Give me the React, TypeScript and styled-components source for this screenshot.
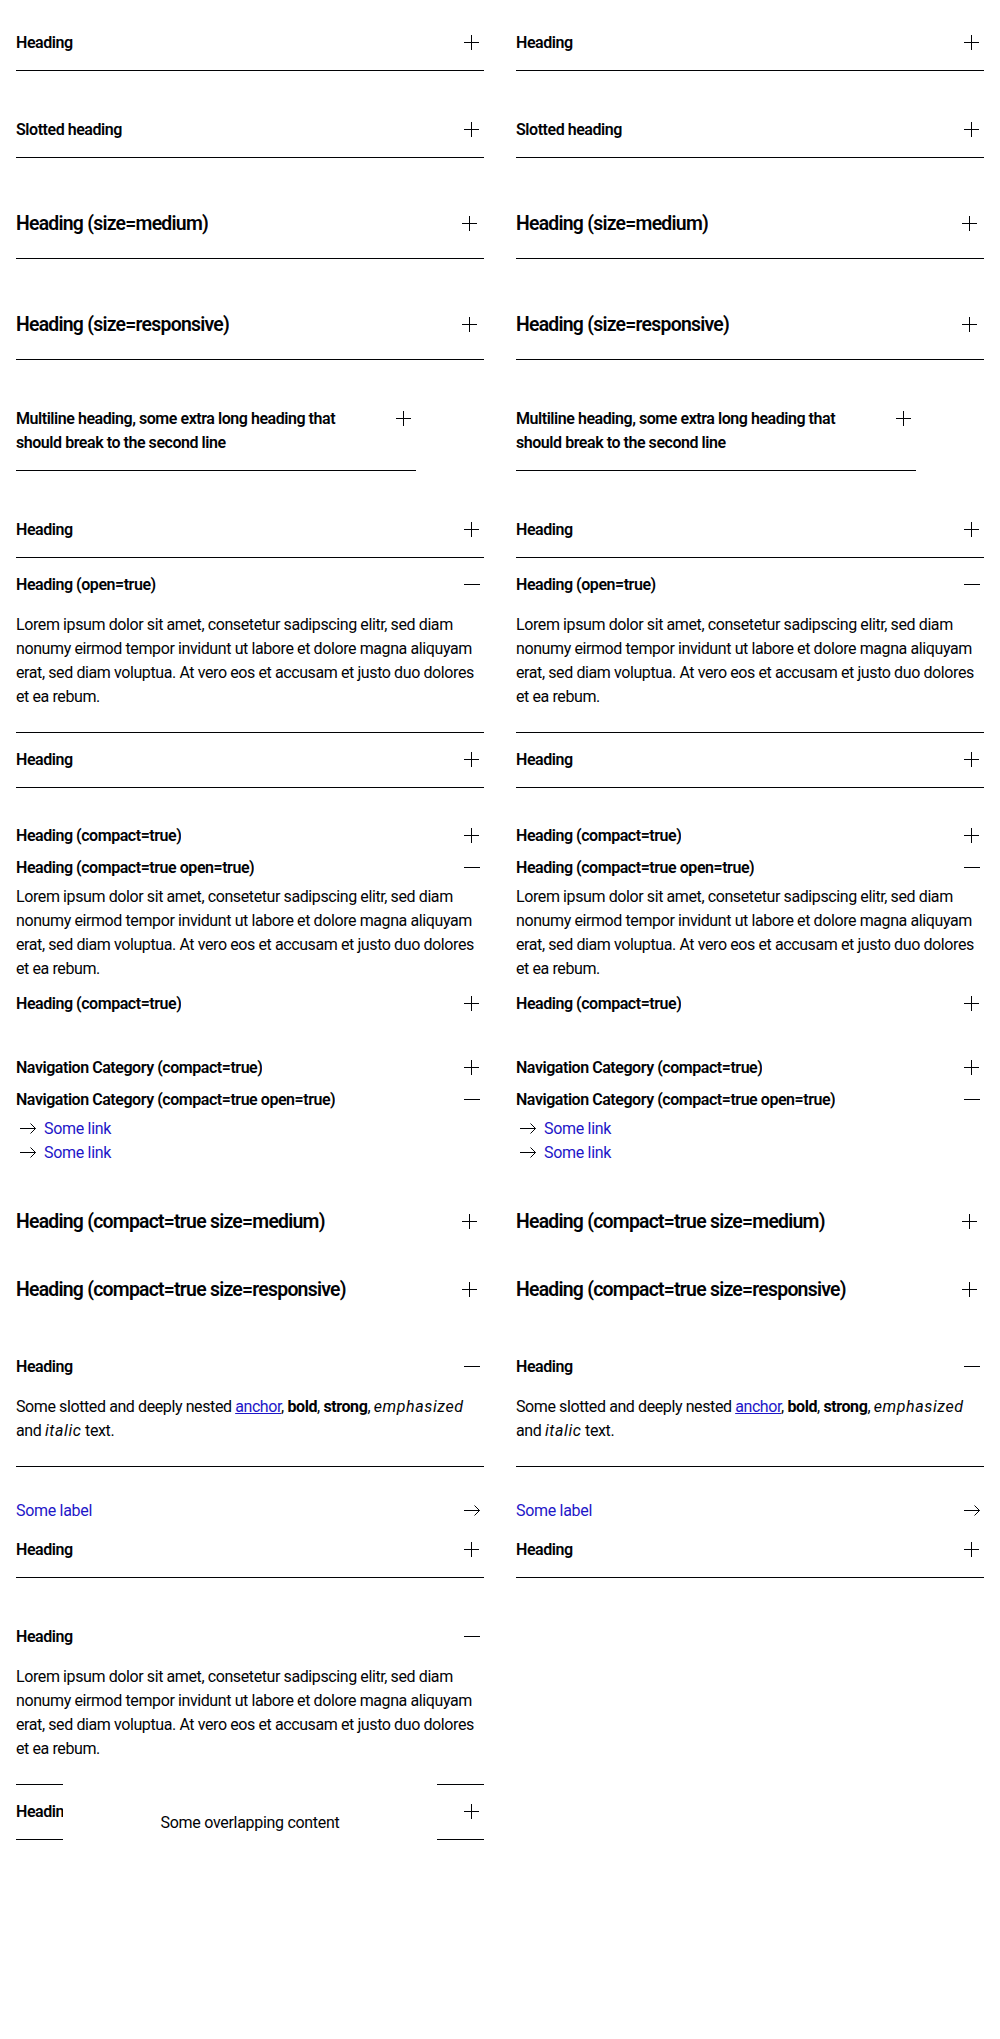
import React from "react";
import styled, { createGlobalStyle } from "styled-components";

const INK = "#010205";
const LINK = "#1e16c8";

const GlobalStyle = createGlobalStyle`
  html, body {
    margin: 0;
    padding: 0;
    background: #fff;
  }
  body {
    font-family: Roboto, "Liberation Sans", Arial, sans-serif;
    color: ${INK};
    -webkit-font-smoothing: antialiased;
  }
  * {
    box-sizing: border-box;
  }
`;

const LOREM =
  "Lorem ipsum dolor sit amet, consetetur sadipscing elitr, sed diam nonumy eirmod tempor invidunt ut labore et dolore magna aliquyam erat, sed diam voluptua. At vero eos et accusam et justo duo dolores et ea rebum.";

// icons
const PlusIcon = () => (
  <svg width="24" height="24" viewBox="0 0 24 24" fill="none" stroke={INK} strokeWidth="1">
    <path d="M4 11.5H19M11.5 4V19" />
  </svg>
);

const MinusIcon = () => (
  <svg width="24" height="24" viewBox="0 0 24 24" fill="none" stroke={INK} strokeWidth="1">
    <path d="M4 11.5H20" />
  </svg>
);

const ArrowIcon = () => (
  <svg width="24" height="24" viewBox="0 0 24 24" fill="none" stroke={INK} strokeWidth="1">
    <path d="M4 11.5H19.5M14.5 6.5L19.5 11.5L14.5 16.5" />
  </svg>
);

// layout
const Page = styled.div`
  display: grid;
  grid-template-columns: 1fr 1fr;
  column-gap: 32px;
  align-items: start;
  padding: 16px;
`;

const Column = styled.div`
  display: flex;
  flex-direction: column;
  gap: 32px;
  min-width: 0;
`;

const Group = styled.div`
  display: flex;
  flex-direction: column;
`;

const Narrow = styled.div`
  max-width: 400px;
`;

// accordion
const Item = styled.div<{ $compact?: boolean }>`
  border-bottom: ${(p) => (p.$compact ? "none" : `1px solid ${INK}`)};
`;

const Summary = styled.div<{ $compact?: boolean; $medium?: boolean }>`
  display: flex;
  align-items: flex-start;
  justify-content: space-between;
  gap: 24px;
  padding: ${(p) => (p.$compact ? "4px 0" : p.$medium ? "20px 0" : "15px 0")};
  cursor: pointer;
`;

const Title = styled.h2<{ $medium?: boolean }>`
  margin: 0;
  font-size: ${(p) => (p.$medium ? "19.4px" : "16px")};
  line-height: ${(p) => (p.$medium ? "28px" : "24px")};
  font-weight: 600;
  letter-spacing: ${(p) => (p.$medium ? "-0.75px" : "-0.45px")};
  white-space: nowrap;
  overflow: hidden;
  ${Narrow} & {
    white-space: normal;
  }
`;

const IconBox = styled.span<{ $medium?: boolean }>`
  flex: none;
  display: flex;
  align-items: center;
  justify-content: center;
  width: 24px;
  height: ${(p) => (p.$medium ? "28px" : "24px")};
  margin-right: ${(p) => (p.$medium ? "2px" : "0")};
`;

const Panel = styled.div<{ $compact?: boolean }>`
  padding: ${(p) => (p.$compact ? "1px 0 7px" : "1px 0 23px")};
`;

const Copy = styled.p`
  margin: 0;
  font-size: 16px;
  line-height: 24px;
  letter-spacing: -0.4px;

  a {
    color: ${LINK};
  }
  em,
  i {
    letter-spacing: 0.6px;
  }
`;

const NavList = styled.ul`
  list-style: none;
  margin: 0;
  padding: 0;
`;

const NavLink = styled.a`
  display: flex;
  align-items: center;
  gap: 4px;
  color: ${LINK};
  text-decoration: none;
  font-size: 16px;
  line-height: 24px;
  letter-spacing: -0.3px;
`;

const LabelLink = styled.a`
  display: flex;
  align-items: center;
  justify-content: space-between;
  color: ${LINK};
  text-decoration: none;
  font-size: 16px;
  line-height: 24px;
  letter-spacing: -0.3px;
`;

const OverlapWrap = styled.div`
  position: relative;
`;

const Overlap = styled.div`
  position: absolute;
  top: -2px;
  bottom: -4px;
  left: 10%;
  right: 10%;
  padding-top: 28px;
  background: #fff;
  text-align: center;
  font-size: 16px;
  line-height: 24px;
  letter-spacing: -0.3px;
`;

interface AccordionProps {
  heading: string;
  open?: boolean;
  compact?: boolean;
  medium?: boolean;
  children?: React.ReactNode;
}

function Accordion({ heading, open, compact, medium, children }: AccordionProps) {
  return (
    <Item $compact={compact}>
      <Summary $compact={compact} $medium={medium}>
        <Title $medium={medium}>{heading}</Title>
        <IconBox $medium={medium}>{open ? <MinusIcon /> : <PlusIcon />}</IconBox>
      </Summary>
      {open && <Panel $compact={compact}>{children}</Panel>}
    </Item>
  );
}

function Examples({ withOverlap }: { withOverlap?: boolean }) {
  return (
    <Column>
      <Accordion heading="Heading" />
      <Accordion heading="Slotted heading" />
      <Accordion heading="Heading (size=medium)" medium />
      <Accordion heading="Heading (size=responsive)" medium />
      <Narrow>
        <Accordion heading="Multiline heading, some extra long heading that should break to the second line" />
      </Narrow>
      <Group>
        <Accordion heading="Heading" />
        <Accordion heading="Heading (open=true)" open>
          <Copy>{LOREM}</Copy>
        </Accordion>
        <Accordion heading="Heading" />
      </Group>
      <Group>
        <Accordion heading="Heading (compact=true)" compact />
        <Accordion heading="Heading (compact=true open=true)" compact open>
          <Copy>{LOREM}</Copy>
        </Accordion>
        <Accordion heading="Heading (compact=true)" compact />
      </Group>
      <Group>
        <Accordion heading="Navigation Category (compact=true)" compact />
        <Accordion heading="Navigation Category (compact=true open=true)" compact open>
          <NavList>
            <li>
              <NavLink href="#">
                <ArrowIcon />
                Some link
              </NavLink>
            </li>
            <li>
              <NavLink href="#">
                <ArrowIcon />
                Some link
              </NavLink>
            </li>
          </NavList>
        </Accordion>
      </Group>
      <Accordion heading="Heading (compact=true size=medium)" compact medium />
      <Accordion heading="Heading (compact=true size=responsive)" compact medium />
      <Accordion heading="Heading" open>
        <Copy>
          Some slotted and deeply nested <a href="#">anchor</a>, <b>bold</b>, <strong>strong</strong>,{" "}
          <em>emphasized</em> and <i>italic</i> text.
        </Copy>
      </Accordion>
      <Group>
        <LabelLink href="#">
          Some label
          <ArrowIcon />
        </LabelLink>
        <Accordion heading="Heading" />
      </Group>
      {withOverlap && (
        <Group>
          <Accordion heading="Heading" open>
            <Copy>{LOREM}</Copy>
          </Accordion>
          <OverlapWrap>
            <Accordion heading="Heading" />
            <Overlap>Some overlapping content</Overlap>
          </OverlapWrap>
        </Group>
      )}
    </Column>
  );
}

export default function App() {
  return (
    <>
      <GlobalStyle />
      <Page>
        <Examples withOverlap />
        <Examples />
      </Page>
    </>
  );
}
